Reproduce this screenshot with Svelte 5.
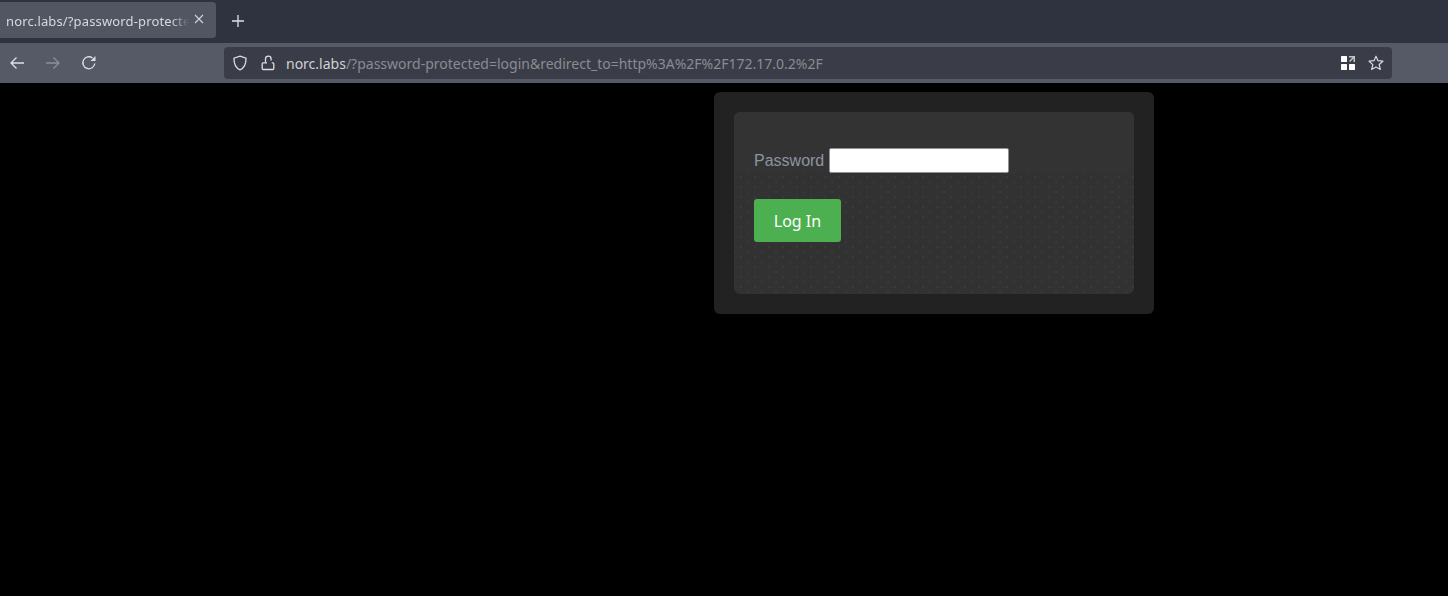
<script>
  const url = 'http%3A%2F%2F172.17.0.2%2F';
</script>

<div class="browser">
  <div class="tabbar">
    <div class="tab">
      <span class="tab-title">norc.labs/?password-protected=login</span>
      <svg class="tab-close" width="10" height="10" viewBox="0 0 10 10"><path d="M1 1l8 8M9 1l-8 8" stroke="#d4d5da" stroke-width="1.1" fill="none"/></svg>
    </div>
    <svg class="newtab" width="14" height="14" viewBox="0 0 14 14"><path d="M7 1v12M1 7h12" stroke="#e0e1e5" stroke-width="1.3" fill="none"/></svg>
  </div>
  <div class="toolbar">
    <div class="nav">
      <svg width="16" height="16" viewBox="0 0 16 16"><path d="M15 8H2M7.500 2.500L2 8l5.500 5.500" stroke="#dfe0e4" stroke-width="1.300" fill="none"/></svg>
      <svg width="16" height="16" viewBox="0 0 16 16"><path d="M1 8h13M8.500 2.500L14 8l-5.500 5.500" stroke="#8d8f99" stroke-width="1.300" fill="none"/></svg>
      <svg width="16" height="16" viewBox="0 0 16 16"><path d="M13.800 8.500A6 6 0 1 1 11.500 3" stroke="#dfe0e4" stroke-width="1.300" fill="none"/><path d="M14.500 1v5h-5z" fill="#dfe0e4"/></svg>
    </div>
    <div class="urlbar">
      <svg class="shield" width="16" height="16" viewBox="0 0 16 16"><path d="M8 1.200l6 2c.2 5.500-1.500 9.500-6 11.600C3.500 12.700 1.800 8.700 2 3.200z" stroke="#dcdde1" stroke-width="1.300" fill="none"/></svg>
      <svg class="lock" width="14" height="16" viewBox="0 0 14 16"><path d="M4.500 7.500V4a2.800 2.800 0 0 1 5.600 0v1.500" stroke="#dcdde1" stroke-width="1.300" fill="none"/><path d="M6 7.800H2.200a1 1 0 0 0-1 1v4.700a1 1 0 0 0 1 1h9.600a1 1 0 0 0 1-1V8.800a1 1 0 0 0-1-1h-1" stroke="#dcdde1" stroke-width="1.300" fill="none"/></svg>
      <div class="address"><span class="host">norc.labs</span><span class="rest">/?password-protected=login&amp;redirect_to={url}</span></div>
      <svg class="qr" width="16" height="16" viewBox="0 0 16 16">
        <rect x="1" y="1" width="6" height="6" rx=".5" fill="#fff"/>
        <rect x="1" y="9" width="6" height="6" rx=".5" fill="#fff"/>
        <rect x="9" y="9" width="6" height="6" rx=".5" fill="#fff"/>
        <path d="M9 1h6v6h-1.500V3.500L10 7 9 6l3.500-3.500H9z" fill="#c3c6c8"/>
      </svg>
      <svg class="star" width="16" height="16" viewBox="0 0 16 16"><path d="M8 1.200l2 4.500 4.900.5-3.700 3.300 1.100 4.900L8 12l-4.300 2.500 1.100-4.900L1.100 6.200 6 5.700z" stroke="#d8d9de" stroke-width="1.200" stroke-linejoin="round" fill="none"/></svg>
    </div>
  </div>
  <main class="page">
    <form class="outer" onsubmit={(e) => e.preventDefault()}>
      <div class="inner">
        <div class="field">
          <label for="pw">Password</label>
          <input id="pw" type="password" />
        </div>
        <button type="submit">Log In</button>
      </div>
    </form>
  </main>
</div>

<style>
  :global(body) { margin: 0; background: #000; }
  .browser { width: 1448px; height: 596px; overflow: hidden; display: flex; flex-direction: column; background: #000; }
  .tabbar { height: 43px; flex: none; box-sizing: border-box; background: #2f3340; display: flex; align-items: flex-start; padding-top: 2px; }
  .tab { width: 216px; height: 36px; box-sizing: border-box; background: #525562; border-radius: 0 4px 4px 0; display: flex; align-items: center; padding-left: 6px; color: #d8d9de; font: 13px "Noto Sans", sans-serif; letter-spacing: 0.14px; }
  .tab-title { width: 183px; margin-top: 2px; overflow: hidden; white-space: nowrap; -webkit-mask-image: linear-gradient(to right, #000 165px, transparent 183px); mask-image: linear-gradient(to right, #000 165px, transparent 183px); }
  .tab-close { margin-left: 5px; margin-top: -3px; }
  .newtab { margin: 12px 0 0 15px; }
  .toolbar { height: 40px; flex: none; box-sizing: border-box; background: #565966; display: flex; align-items: center; padding: 0 56px 0 0; }
  .nav { display: flex; align-items: center; gap: 20px; padding-left: 9px; width: 224px; flex: none; box-sizing: border-box; }
  .urlbar { flex: 1; height: 32px; background: #3a3d47; border-radius: 4px; display: flex; align-items: center; padding: 0 8px; font: 14px "Noto Sans", sans-serif; }
  .lock { margin-left: 13px; }
  .address { flex: 1; margin-left: 11px; white-space: nowrap; }
  .host { color: #d0d1d6; }
  .rest { color: #8a8c93; }
  .star { margin-left: 12px; }
  .page { flex: 1; padding: 9px 0 0 714px; }
  .outer { width: 440px; box-sizing: border-box; padding: 20px; background: #222; border-radius: 6px; }
  .inner { height: 182px; box-sizing: border-box; padding: 36px 20px 0; border-radius: 6px; background-color: #323232;
    background-image: radial-gradient(circle, #3d3d3d 0.6px, transparent 1px), radial-gradient(circle, #3d3d3d 0.6px, transparent 1px);
    background-size: 14px 10px, 14px 10px;
    background-position: 0 0, 7px 5px;
    position: relative; }
  .inner::before { content: ""; position: absolute; left: 0; right: 0; top: 0; height: 60px; background: #333; border-radius: 6px 6px 0 0; }
  .field { position: relative; display: flex; align-items: center; gap: 5px; margin-bottom: 26px; }
  label { color: #8d93a2; font: 16px "Liberation Sans", sans-serif; }
  input { width: 180px; height: 25px; box-sizing: border-box; padding: 1px 2px; border: 1px solid #8f8f9d; background: #fff; border-radius: 2px; }
  button { display: block; position: relative; width: 87px; height: 43px; border: 0; border-radius: 3px; background: #4caf50; color: #fff; font: 16px "Noto Sans", sans-serif; padding: 0; }
</style>
